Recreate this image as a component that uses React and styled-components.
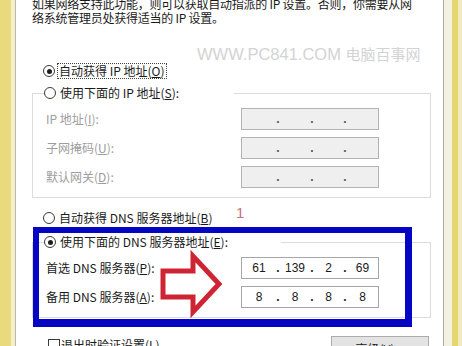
import React from 'react';
import styled, { createGlobalStyle } from 'styled-components';

const GlobalStyle = createGlobalStyle`
  html, body {
    margin: 0;
    padding: 0;
    background: #fff;
    overflow: hidden;
  }
  body {
    font-family: "Noto Sans CJK SC", "Noto Sans", sans-serif;
    color: #1a1a1a;
  }
`;

const ipRows = [
  { label: 'IP 地址', key: 'I' },
  { label: '子网掩码', key: 'U' },
  { label: '默认网关', key: 'D' },
];

const dnsRows = [
  { label: '首选 DNS 服务器', key: 'P', parts: ['61', '139', '2', '69'] },
  { label: '备用 DNS 服务器', key: 'A', parts: ['8', '8', '8', '8'] },
];

const IpField = ({ parts = ['', '', '', ''], disabled }) => (
  <IpBox $disabled={disabled}>
    {parts.map((p, i) => (
      <React.Fragment key={i}>
        {i > 0 && <IpDot $disabled={disabled}>.</IpDot>}
        <IpPart>{p}</IpPart>
      </React.Fragment>
    ))}
  </IpBox>
);

const Radio = ({ checked }) => <RadioCircle $checked={checked} />;

const App = () => {
  return (
    <>
      <GlobalStyle />
      <Frame>
        <EdgeLeft />
        <Panel>
          <Desc>
            如果网络支持此功能，则可以获取自动指派的 IP 设置。否则，你需要从网
            <br />
            络系统管理员处获得适当的 IP 设置。
          </Desc>

          <RadioRow>
            <Radio checked />
            <RadioText $focus>
              自动获得 IP 地址(<U>O</U>)
            </RadioText>
          </RadioRow>

          <Group $gap={14}>
            <Legend $width={190}>
              <Radio />
              <RadioText>
                使用下面的 IP 地址(<U>S</U>):
              </RadioText>
            </Legend>
            <Rows>
              {ipRows.map((r) => (
                <FieldRow key={r.key}>
                  <FieldLabel $disabled>
                    {r.label}(<U>{r.key}</U>):
                  </FieldLabel>
                  <IpField disabled />
                </FieldRow>
              ))}
            </Rows>
          </Group>

          <RadioRow $gap={12}>
            <Radio />
            <RadioText>
              自动获得 DNS 服务器地址(<U>B</U>)
            </RadioText>
          </RadioRow>

          <Group $gap={16}>
            <Legend $width={237}>
              <Radio checked />
              <RadioText>
                使用下面的 DNS 服务器地址(<U>E</U>):
              </RadioText>
            </Legend>
            <Rows>
              {dnsRows.map((r) => (
                <FieldRow key={r.key}>
                  <FieldLabel>
                    {r.label}(<U>{r.key}</U>):
                  </FieldLabel>
                  <IpField parts={r.parts} />
                </FieldRow>
              ))}
            </Rows>
          </Group>

          <Footer>
            <CheckRow>
              <CheckBox />
              <span>
                退出时验证设置(<U>L</U>)
              </span>
            </CheckRow>
            <Button>
              高级(<U>V</U>)...
            </Button>
          </Footer>

          {/* overlays: watermark and the hand-drawn annotation */}
          <Watermark>
            WWW.PC841.COM <WatermarkCn>电脑百事网</WatermarkCn>
          </Watermark>
          <StepNumber>1</StepNumber>
          <Highlight />
          <ArrowMark viewBox='0 0 80 76' width='80' height='76'>
            <polygon
              points='13,25 43,25 43,10 69,38 43,66 43,51 13,51'
              fill='none'
              stroke='#cf2433'
              strokeWidth='5'
              strokeLinejoin='miter'
            />
          </ArrowMark>
        </Panel>
        <EdgeRight />
      </Frame>
    </>
  );
};

export default App;

const Frame = styled.div`
  display: flex;
  width: 462px;
  height: 346px;
  overflow: hidden;
`;

const EdgeLeft = styled.div`
  flex: 0 0 16px;
  background: linear-gradient(
    to right,
    #e9da7e 0 11px,
    #f5efcc 11px 15px,
    #b7b7b7 15px 16px
  );
`;

const EdgeRight = styled.div`
  flex: 0 0 19px;
  background: linear-gradient(
    to right,
    #a9a9a9 0 1px,
    #f4f1e1 1px 9px,
    #e5d76f 9px 15px,
    #f2ebc2 15px 19px
  );
`;

const Panel = styled.div`
  position: relative;
  flex: 1;
  display: flex;
  flex-direction: column;
  padding: 0 12px 0 16px;
  background: #fff;
  font-size: 12px;
  line-height: 16px;
  overflow: hidden;
`;

const Desc = styled.p`
  margin: -3px 0 0;
  line-height: 14px;
  white-space: nowrap;
  letter-spacing: -0.25px;
`;

const U = styled.span`
  text-decoration: underline;
  text-underline-offset: 1px;
`;

const RadioRow = styled.div`
  display: flex;
  align-items: center;
  gap: 2px;
  height: 16px;
  margin: ${(p) => p.$gap ?? 38}px 0 0 11px;
  white-space: nowrap;
`;

const RadioCircle = styled.span`
  position: relative;
  flex: 0 0 12px;
  height: 12px;
  box-sizing: border-box;
  border: 1px solid #3a3a3a;
  border-radius: 50%;
  background: #fff;

  &::after {
    content: '';
    display: ${(p) => (p.$checked ? 'block' : 'none')};
    position: absolute;
    left: 2.5px;
    top: 2.5px;
    width: 5px;
    height: 5px;
    border-radius: 50%;
    background: #1f1f1f;
  }
`;

const RadioText = styled.span`
  padding: 0 1px;
  border: 1px dotted ${(p) => (p.$focus ? '#444' : 'transparent')};
  line-height: 14px;
`;

const Group = styled.div`
  display: flex;
  flex-direction: column;
  margin-top: ${(p) => p.$gap}px;
  padding: 0 0 9px 13px;
  border: 1px solid #dcdcdc;
`;

const Legend = styled.div`
  display: flex;
  align-items: center;
  gap: 2px;
  width: ${(p) => p.$width}px;
  height: 16px;
  margin: -9px 0 0 -2px;
  background: #fff;
  white-space: nowrap;
`;

const Rows = styled.div`
  display: flex;
  flex-direction: column;
  gap: 7px;
  margin-top: 7px;
`;

const FieldRow = styled.div`
  display: flex;
  align-items: center;
`;

const FieldLabel = styled.span`
  flex: 0 0 195px;
  color: ${(p) => (p.$disabled ? '#9d9d9d' : '#1a1a1a')};
  white-space: nowrap;
`;

const IpBox = styled.div`
  display: grid;
  grid-template-columns: 34px 4px 30px 4px 29px 4px 1fr;
  align-items: center;
  width: 138px;
  height: 22px;
  box-sizing: border-box;
  border: 1px solid ${(p) => (p.$disabled ? '#b3b3b3' : '#a6a6a6')};
  background: ${(p) => (p.$disabled ? '#efefef' : '#fff')};
  font-family: "Liberation Sans", Arial, sans-serif;
  font-size: 12px;
  line-height: 14px;
  color: #1a1a1a;
`;

const IpPart = styled.span`
  text-align: center;
`;

const IpDot = styled.span`
  text-align: center;
  font-weight: bold;
  color: ${(p) => (p.$disabled ? '#555' : '#1a1a1a')};
`;

const Footer = styled.div`
  display: flex;
  justify-content: space-between;
  align-items: flex-start;
  margin: 18px 2px 0 16px;
`;

const CheckRow = styled.div`
  display: flex;
  align-items: center;
  gap: 1px;
  margin-top: 1px;
  white-space: nowrap;
`;

const CheckBox = styled.span`
  width: 12px;
  height: 12px;
  box-sizing: border-box;
  border: 1px solid #3a3a3a;
  background: #fff;
`;

const Button = styled.div`
  width: 98px;
  height: 23px;
  box-sizing: border-box;
  border: 1px solid #adadad;
  background: #e3e3e3;
  text-align: center;
  line-height: 22px;
  padding-top: 1px;
  white-space: nowrap;
`;

const Watermark = styled.div`
  position: absolute;
  left: 181px;
  top: 45px;
  font-family: "Liberation Sans", Arial, sans-serif;
  font-size: 16.5px;
  line-height: 18px;
  color: #d3d3d3;
  white-space: nowrap;
`;

const WatermarkCn = styled.span`
  font-family: "Noto Sans CJK SC", sans-serif;
  font-size: 15px;
`;

const StepNumber = styled.div`
  position: absolute;
  left: 220px;
  top: 205px;
  font-family: "Liberation Sans", Arial, sans-serif;
  font-size: 15px;
  line-height: 16px;
  color: #c8707c;
`;

const Highlight = styled.div`
  position: absolute;
  left: 17px;
  top: 227px;
  width: 379px;
  height: 100px;
  box-sizing: border-box;
  border-style: solid;
  border-color: #0505c4;
  border-width: 6px 7px 8px 6px;
`;

const ArrowMark = styled.svg`
  position: absolute;
  left: 134px;
  top: 246px;
`;
